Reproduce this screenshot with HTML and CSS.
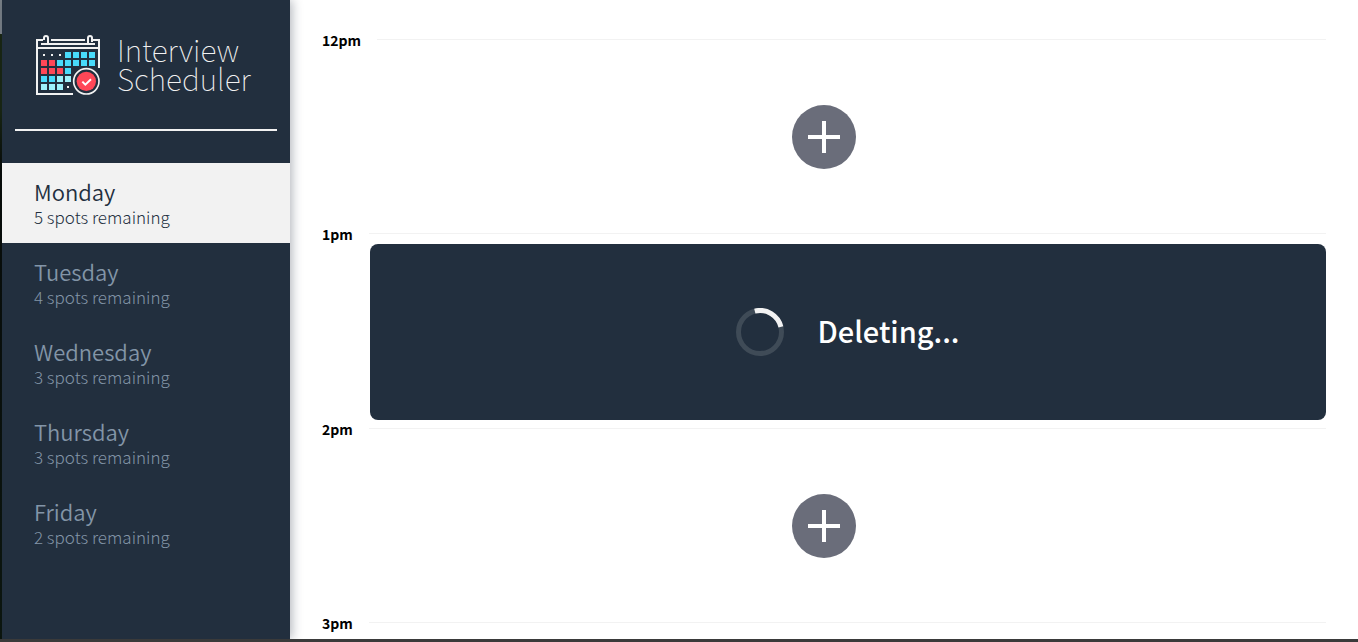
FILE: index.html
```html
<!DOCTYPE html>
<html lang="en">
<head>
<meta charset="utf-8">
<title>Interview Scheduler</title>
<link rel="stylesheet" href="styles.css">
</head>
<body>
<div class="layout">
  <aside class="sidebar">
    <div class="brand">
      <svg class="brand-icon" viewBox="33 30 192 180" aria-hidden="true">
        <g fill="none" stroke="#f2f2f2" stroke-width="6">
          <path d="M54 45H36V207H144M78 45H180M204 45H222V129M36 69H222M48 57H210"/>
          <path d="M57 45V39a6 6 0 0 1 12 0V57M189 57V39a6 6 0 0 1 12 0V51"/>
        </g>
        <path fill="#f2f2f2" d="M54 87h6v6h-6zM78 87h6v6h-6zM102 87h6v6h-6zM126 183h6v6h-6z"/>
        <path fill="#48dbfb" d="M120 81h18v18h-18zM144 81h18v18h-18zM168 81h18v18h-18zM192 81h18v18h-18zM96 105h18v18H96zM120 105h18v18h-18zM144 105h18v18h-18zM168 105h18v18h-18zM192 105h18v18h-18zM120 129h18v18h-18zM48 153h18v18H48zM72 153h18v18H72z"/>
        <path fill="#ff4757" d="M48 105h18v18H48zM72 105h18v18H72zM48 129h18v18H48zM72 129h18v18H72zM96 129h18v18H96z"/>
        <path fill="#9df1fb" d="M96 153h18v18H96zM120 153h18v18h-18zM48 177h18v18H48zM72 177h18v18H72zM96 177h18v18H96z"/>
        <circle cx="184" cy="169" r="38" fill="#222f3e" stroke="#f2f2f2" stroke-width="5"/>
        <circle cx="184" cy="169" r="29" fill="#ff4757"/>
        <path d="M172 170l9 9 17-16" fill="none" stroke="#fff" stroke-width="6"/>
      </svg>
      <h1 class="brand-name">Interview<br>Scheduler</h1>
    </div>
    <hr class="divider">
    <nav class="days">
      <button class="day day-selected" type="button"><span class="day-name">Monday</span><span class="day-spots">5 spots remaining</span></button>
      <button class="day" type="button"><span class="day-name">Tuesday</span><span class="day-spots">4 spots remaining</span></button>
      <button class="day" type="button"><span class="day-name">Wednesday</span><span class="day-spots">3 spots remaining</span></button>
      <button class="day" type="button"><span class="day-name">Thursday</span><span class="day-spots">3 spots remaining</span></button>
      <button class="day" type="button"><span class="day-name">Friday</span><span class="day-spots">2 spots remaining</span></button>
    </nav>
  </aside>
  <main class="schedule">
    <section class="slot">
      <h2 class="slot-time">12pm</h2>
      <div class="slot-body">
        <button class="add" type="button" aria-label="Add appointment at 12pm"><svg class="add-icon" viewBox="0 0 32 32"><path d="M14 0h4v14h14v4H18v14h-4V18H0v-4h14z" fill="#fff"/></svg></button>
      </div>
    </section>
    <section class="slot">
      <h2 class="slot-time">1pm</h2>
      <div class="slot-body status">
        <svg class="spinner" viewBox="0 0 48 48" aria-hidden="true">
          <circle cx="24" cy="24" r="21.5" fill="none" stroke="#3f4b57" stroke-width="5"/>
          <path d="M18.8 3.1A21.5 21.5 0 0 1 44.9 18.8" fill="none" stroke="#f2f2f2" stroke-width="5"/>
        </svg>
        <p class="status-text">Deleting...</p>
      </div>
    </section>
    <section class="slot">
      <h2 class="slot-time">2pm</h2>
      <div class="slot-body">
        <button class="add" type="button" aria-label="Add appointment at 2pm"><svg class="add-icon" viewBox="0 0 32 32"><path d="M14 0h4v14h14v4H18v14h-4V18H0v-4h14z" fill="#fff"/></svg></button>
      </div>
    </section>
    <section class="slot">
      <h2 class="slot-time">3pm</h2>
      <div class="slot-body"></div>
    </section>
  </main>
</div>
</body>
</html>
```
FILE: styles.css
```css
* { box-sizing: border-box; }

body {
  margin: 0;
  font-family: "Noto Sans CJK SC", "Open Sans", sans-serif;
  color: #000;
  background: #fff;
}

button {
  border: 0;
  padding: 0;
  font: inherit;
  cursor: pointer;
}

.layout {
  display: flex;
  height: 100vh;
  overflow: hidden;
  border-bottom: 3px solid #3a3a3a;
  padding-left: 2px;
  background: linear-gradient(#7b8288 0 34px, #17240f 34px 110px, #050805 170px, #0a140b 100%) left / 2px 100% no-repeat;
}

.sidebar {
  flex: none;
  width: 288px;
  background: #222f3e;
  box-shadow: 2px 0 10px rgba(34, 47, 62, 0.35);
}

.brand {
  display: flex;
  gap: 17px;
  padding: 35px 0 0 34px;
}

.brand-icon {
  width: 64px;
  height: 60px;
}

.brand-name {
  margin: 0;
  font-size: 30px;
  line-height: 29px;
  font-weight: 100;
  color: #f2f2f2;
}

.divider {
  height: 2px;
  margin: 34px 13px 32px;
  border: 0;
  background: #f2f2f2;
}

.day {
  display: flex;
  flex-direction: column;
  justify-content: center;
  width: 100%;
  height: 80px;
  padding: 0 32px;
  background: none;
  color: #8395a7;
  text-align: left;
}

.day-selected {
  background: #f2f2f2;
  color: #222f3e;
}

.day-name {
  font-size: 22px;
  line-height: 26px;
  font-weight: 350;
}

.day-spots {
  font-size: 17px;
  line-height: 25px;
  font-weight: 300;
}

.schedule {
  flex: 1;
  padding: 31px 32px;
}

.slot-time {
  display: flex;
  align-items: center;
  gap: 16px;
  margin: 0;
  font-size: 14px;
  line-height: 18px;
  font-weight: 700;
}

.slot-time::after {
  content: "";
  flex: 1;
  height: 1px;
  margin-bottom: 1px;
  background: #f2f2f2;
}

.slot-body {
  display: flex;
  align-items: center;
  justify-content: center;
  height: 176px;
}

.add {
  display: grid;
  place-items: center;
  width: 64px;
  height: 64px;
  border-radius: 50%;
  background: #6a6d7a;
}

.add-icon {
  width: 32px;
  height: 32px;
}

.status {
  gap: 33px;
  margin: 1px 0 0 48px;
  border-radius: 8px;
  background: #222f3e;
  color: #fff;
}

.spinner {
  width: 48px;
  height: 48px;
}

.status-text {
  margin: 0;
  font-size: 29px;
  line-height: 40px;
  padding-bottom: 4px;
  font-weight: 500;
}
```
